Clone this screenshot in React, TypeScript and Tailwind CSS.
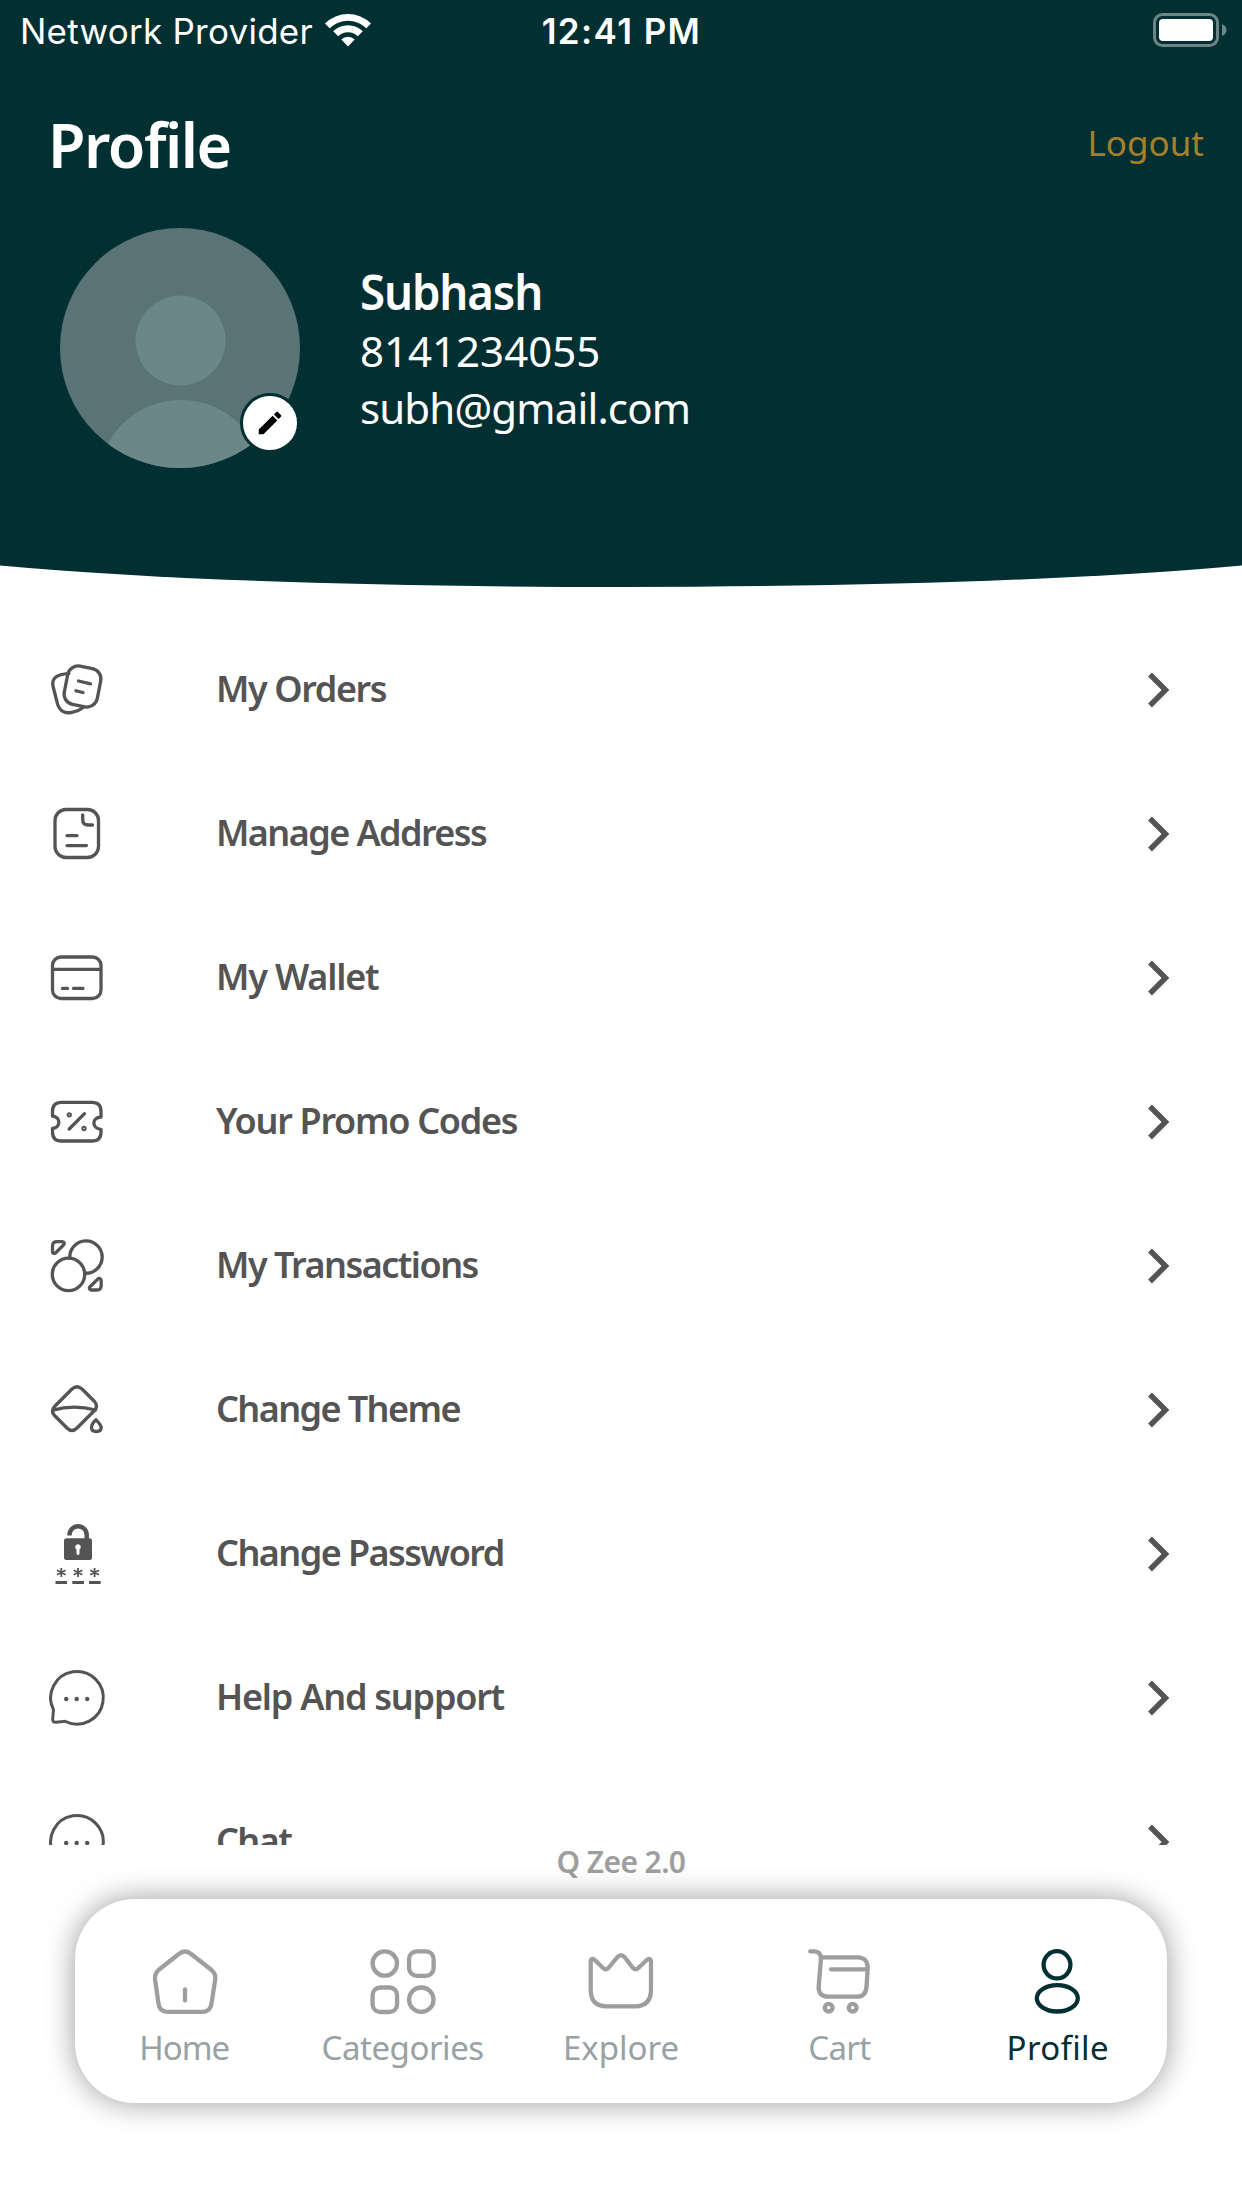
import React from 'react';

const menu = [
  { label: 'My Orders', icon: 'orders', tracking: 'tracking-[-1.4px]' },
  { label: 'Manage Address', icon: 'address', tracking: 'tracking-[-1.58px]' },
  { label: 'My Wallet', icon: 'wallet', tracking: 'tracking-[-1.2px]' },
  { label: 'Your Promo Codes', icon: 'promo', tracking: 'tracking-[-1.3px]' },
  { label: 'My Transactions', icon: 'transactions', tracking: 'tracking-[-1.53px]' },
  { label: 'Change Theme', icon: 'theme', tracking: 'tracking-[-1.6px]' },
  { label: 'Change Password', icon: 'password', tracking: 'tracking-[-1.57px]' },
  { label: 'Help And support', icon: 'chat', tracking: 'tracking-[-1.23px]' },
  { label: 'Chat', icon: 'chat', tracking: 'tracking-[-1.6px]' },
];

const glyphs: Record<string, React.ReactNode> = {
  orders: (
    <>
      <rect x="25.7" y="13" width="33.6" height="39" rx="10.5" transform="rotate(11 42.5 32.5)" />
      <path d="M29 19.3C16.5 20.5 11 24 13.2 33L17 48C19 57 24.5 60 32 58.3Q38 57.5 42.5 54M38.5 27L50.5 29.8M36 36.8L43 38.5" />
    </>
  ),
  address: (
    <>
      <rect x="15" y="11.5" width="43.5" height="48" rx="11" />
      <path d="M42.7 17V21.5Q42.7 27 48.2 27H52.5M27 37.7H37M27 47.6H46.5" />
    </>
  ),
  wallet: (
    <>
      <rect x="12.5" y="15" width="48.5" height="41.5" rx="8.5" />
      <path d="M13 27.3H60M22.5 46.4H27.5M33.5 46.4H43" />
    </>
  ),
  promo: (
    <>
      <path d="M21.5 16.3H52Q61 16.3 61 25.3V31C51.5 31.5 51.5 42.5 61 43.3V46Q61 55 52 55H21.5Q12.5 55 12.5 46V42.5C21 41.5 21 31 12.5 30V25.3Q12.5 16.3 21.5 16.3ZM29.2 43L44.5 27.7" />
      <circle cx="29.3" cy="28.8" r="1" />
      <circle cx="44" cy="42.5" r="1" />
    </>
  ),
  transactions: (
    <>
      <circle cx="28.5" cy="44.4" r="16.2" />
      <path d="M29.8 28A16.2 16.2 0 1 1 45 43.2M12.5 16V21.5C12.5 23.5 14.5 24 16 22.5L23.5 15C25 13.5 24 11.7 22 11.7H17Q12.5 11.7 12.5 16ZM61.2 55.5V51C61.2 48.5 59 47.8 57.5 49.3L50.2 56.5C48.7 58 49.5 60 51.7 60H57Q61.2 60 61.2 55.5Z" />
    </>
  ),
  theme: (
    <path d="M32 15Q37 10.5 42 15L54.5 27.5Q58.5 32 54.5 36.5L37 54Q32 59 27 54L14.5 41.5Q10.5 37 14.5 32.5ZM13 36.2C26 32.5 42 32.5 55.5 36M56 45.8Q61.2 51 61.2 53.5Q61.2 57.5 56.3 57.5Q51.5 57.5 51.5 53.5Q51.5 50 56 45.8Z" />
  ),
  chat: (
    <>
      <path d="M13.4 47.5A26.3 26.3 0 1 1 25.5 59.5Q24.5 59.2 23 59.5L16 60.2Q12.5 60.5 12.7 57L13.2 51Q13.5 49 13.4 47.5Z" strokeWidth="3" />
      <g fill="currentColor" stroke="none">
        <circle cx="26.2" cy="37" r="2.2" />
        <circle cx="36.7" cy="37" r="2.2" />
        <circle cx="47.2" cy="37" r="2.2" />
      </g>
    </>
  ),
  password: (
    <g stroke="none" fill="currentColor">
      <path d="M29.5 17.5V16.8A8.6 8.6 0 0 1 46.7 16.8V22" fill="none" stroke="currentColor" strokeWidth="4.5" strokeLinecap="butt" />
      <path fillRule="evenodd" d="M26.5 20.3H49.5Q52 20.3 52 22.8V39.5Q52 42 49.5 42H26.5Q24 42 24 39.5V22.8Q24 20.3 26.5 20.3ZM36.5 31.5V36Q38 38 39.5 36V31.5A2.8 2.8 0 1 0 36.5 31.5Z" />
      <path d="M15.5 64.5H27M32.3 64.5H44M49 64.5H60.7" stroke="currentColor" strokeWidth="2.9" strokeLinecap="butt" />
      <path d="M21.3 50V59M17 52.3L25.6 56.8M25.6 52.3L17 56.8M38 50V59M33.7 52.3L42.3 56.8M42.3 52.3L33.7 56.8M54.6 50V59M50.3 52.3L58.9 56.8M58.9 52.3L50.3 56.8" stroke="currentColor" strokeWidth="1.8" strokeLinecap="butt" />
    </g>
  ),
};

const nav = [
  {
    label: 'Home',
    active: false,
    tracking: 'tracking-[-1px]',
    art: <path d="M31.5 7.5Q37 3.5 42.5 7.5L63.5 24Q68 28 67.3 33L63.5 57.5Q62.5 65.8 54.5 65.8H19.5Q11.5 65.8 10.5 57.5L7 33Q6.5 28 10.5 24ZM37 43.5V54.5" />,
  },
  {
    label: 'Categories',
    active: false,
    tracking: 'tracking-[-0.45px]',
    art: (
      <g transform="translate(-0.7 0)">
        <circle cx="18.5" cy="17.5" r="12.2" />
        <rect x="42.8" y="5.3" width="24.5" height="24.5" rx="7.5" />
        <rect x="6.3" y="41.5" width="24.5" height="24.5" rx="7.5" />
        <circle cx="55" cy="53.7" r="12.2" />
      </g>
    ),
  },
  {
    label: 'Explore',
    active: false,
    tracking: 'tracking-normal',
    art: <path d="M5.7 16C5.7 12.5 8 12 10 14.2L18 22Q20.7 24.5 23.4 22L32.5 11Q36 7.5 39.5 11L48 22Q50.7 24.5 53.4 22L61.5 14.2C63.8 12 66 12.5 66 16V43.5Q66 60.3 50 60.3H21.7Q5.7 60.3 5.7 43.5Z" />,
  },
  {
    label: 'Cart',
    active: false,
    tracking: 'tracking-[-0.6px]',
    art: (
      <g transform="translate(1 0)">
        <path d="M6.2 5.3H9.5Q17 5.3 17 12.5L14.7 40Q14 50.7 24.5 50.7H53Q61.8 50.7 62.5 41L63.7 22.5Q64 11.3 53.5 11.3H17M27 23.3H63" />
        <circle cx="24.7" cy="61.7" r="3.9" />
        <circle cx="48.7" cy="61.7" r="3.9" />
      </g>
    ),
  },
  {
    label: 'Profile',
    active: true,
    tracking: 'tracking-[0.35px]',
    art: (
      <>
        <ellipse cx="35" cy="18.8" rx="13.4" ry="13.6" />
        <ellipse cx="35.3" cy="52.3" rx="20.5" ry="13.2" />
      </>
    ),
  },
];

function MenuRow({ label, icon, tracking }: { label: string; icon: string; tracking: string }) {
  return (
    <li className="flex h-36 shrink-0 items-center pl-10 pr-[60px] text-[#545454]">
      <svg className="size-[72px] shrink-0" viewBox="0 0 72 72" fill="none" stroke="currentColor" strokeWidth="3.3" strokeLinecap="round" strokeLinejoin="round">
        {glyphs[icon]}
      </svg>
      <span className={`mb-0.5 ml-[104px] flex-1 whitespace-nowrap text-4xl leading-[48px] font-semibold ${tracking}`}>{label}</span>
      <svg className="size-[46px]" viewBox="0 0 46 46" fill="none" stroke="currentColor" strokeWidth="5.4">
        <path d="M14 7.5L29.5 23L14 38.5" />
      </svg>
    </li>
  );
}

export default function App() {
  return (
    <div className="flex h-[2208px] w-[1242px] flex-col overflow-hidden bg-white font-['Noto_Sans',sans-serif]">
      <header className="relative h-[588px] shrink-0 text-white">
        <svg className="absolute inset-0 h-full w-full" viewBox="0 0 1242 588">
          <path d="M0 0H1242V565.5Q1012 586.5 621 587Q230 586.5 0 565.5Z" fill="#022f32" />
        </svg>
        <div className="relative grid h-[60px] grid-cols-3 items-center pl-5 pr-[15px] font-['Inter',sans-serif] text-[35px]">
          <div className="flex items-center gap-[11px]">
            <span className="mt-0.5 whitespace-nowrap tracking-[0.25px]">Network Provider</span>
            <svg className="h-[34px] w-[48px] shrink-0" viewBox="0 0 48 34" fill="white">
              <path d="M1 10.5A32.5 32.5 0 0 1 47 10.5L42.3 15.3A26 26 0 0 0 5.7 15.3Z" />
              <path d="M9.2 18.3A21 21 0 0 1 38.8 18.3L33.8 23.3A14 14 0 0 0 14.2 23.3Z" />
              <path d="M17.3 26.5A9.5 9.5 0 0 1 30.7 26.5L24 33.5Z" />
            </svg>
          </div>
          <span className="mt-0.5 mr-1 text-center font-semibold tracking-[1.4px]">12:41 PM</span>
          <svg className="ml-auto h-[34px] w-[74px]" viewBox="0 0 74 34">
            <rect x="1.5" y="1.5" width="63" height="31" rx="8" fill="none" stroke="#6c8586" strokeWidth="3" />
            <rect x="6" y="6" width="54" height="22" rx="4" fill="white" />
            <path d="M69 11Q73.5 13 73.5 17Q73.5 21 69 23Z" fill="#6c8586" />
          </svg>
        </div>
        <div className="relative mt-[38px] flex h-[92px] items-center justify-between pl-12 pr-[38px]">
          <h1 className="text-[61px] leading-none font-semibold tracking-[-1.5px]">Profile</h1>
          <span className="mb-1 text-[35px] leading-none text-[#a67f2b]">Logout</span>
        </div>
        <div className="relative mt-[38px] flex pl-[60px]">
          <div className="relative size-[240px]">
            <svg className="size-full" viewBox="0 0 240 240">
              <clipPath id="avatar"><circle cx="120" cy="120" r="120" /></clipPath>
              <g clipPath="url(#avatar)">
                <rect width="240" height="240" fill="#5a7376" />
                <circle cx="120.5" cy="112.5" r="45" fill="#6c8787" />
                <circle cx="121" cy="254.5" r="82.7" fill="#6c8787" />
              </g>
            </svg>
            <div className="absolute left-[180px] top-[165px] flex size-[60px] items-center justify-center rounded-full border-[3px] border-[#022f32] bg-white">
              <svg className="size-[30px]" viewBox="0 0 24 24" fill="black">
                <path d="M3 17.25V21h3.75L17.81 9.94l-3.75-3.75L3 17.25zM20.71 7.04a1 1 0 0 0 0-1.41l-2.34-2.34a1 1 0 0 0-1.41 0l-1.83 1.83 3.75 3.75 1.83-1.83z" />
              </svg>
            </div>
          </div>
          <div className="ml-[60px] flex flex-col pt-[33px] text-[42px]">
            <span className="h-[61px] origin-left scale-x-[0.93] text-[49px] leading-[61px] font-semibold tracking-[-1.2px]">Subhash</span>
            <span className="h-[57px] leading-[57px]">8141234055</span>
            <span className="h-[57px] leading-[57px] tracking-[-0.85px]">subh@gmail.com</span>
          </div>
        </div>
      </header>
      <ul className="flex h-[1257px] shrink-0 flex-col overflow-hidden pt-[30px]">
        {menu.map((item) => (
          <MenuRow key={item.label} {...item} />
        ))}
      </ul>
      <p className="h-[54px] shrink-0 text-center text-[30px] leading-[34px] font-semibold tracking-[-0.6px] text-[#9e9e9e]">Q Zee 2.0</p>
      <nav className="mx-[75px] grid h-[204px] shrink-0 grid-cols-5 rounded-[60px] bg-white shadow-[0_0_30px_rgba(0,0,0,0.4)]">
        {nav.map((item) => (
          <div key={item.label} className={`flex flex-col items-center pt-[47px] ${item.active ? 'text-[#022f32]' : 'text-[#9e9e9e]'}`}>
            <svg className="size-[72px]" viewBox="0 0 72 72" fill="none" stroke="currentColor" strokeWidth="4.3" strokeLinecap="round" strokeLinejoin="round">
              {item.art}
            </svg>
            <span className={`mt-2 text-[33px] leading-[44px] ${item.tracking} ${item.active ? '' : 'text-[#98a1a3]'}`}>{item.label}</span>
          </div>
        ))}
      </nav>
    </div>
  );
}
